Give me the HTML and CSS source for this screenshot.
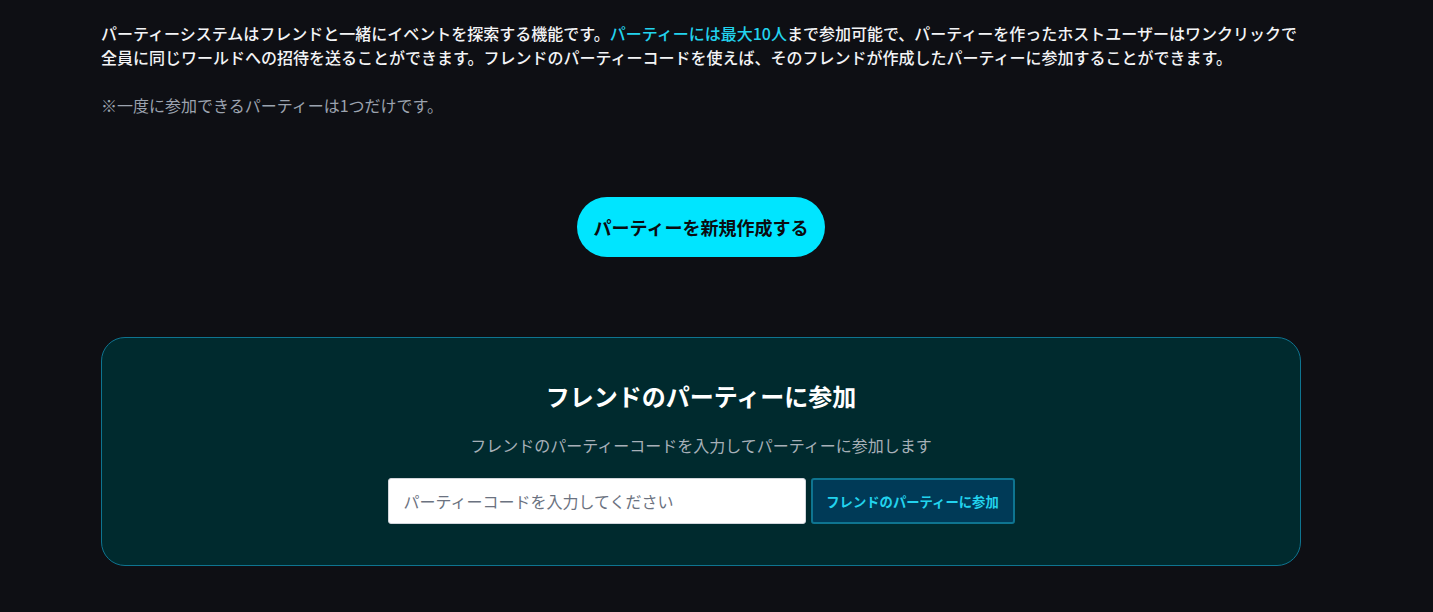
FILE: index.html
```html
<!DOCTYPE html>
<html lang="ja">
<head>
<meta charset="utf-8">
<link rel="stylesheet" href="styles.css">
</head>
<body>
<main class="page">
  <section class="intro">
    <p class="lead">パーティーシステムはフレンドと一緒にイベントを探索する機能です。<span class="accent">パーティーには最大10人</span>まで参加可能で、パーティーを作ったホストユーザーはワンクリックで全員に同じワールドへの招待を送ることができます。フレンドのパーティーコードを使えば、そのフレンドが作成したパーティーに参加することができます。</p>
    <p class="note">※一度に参加できるパーティーは1つだけです。</p>
  </section>
  <section class="create">
    <button class="create-btn" type="button">パーティーを新規作成する</button>
  </section>
  <section class="join-card">
    <h2 class="join-title">フレンドのパーティーに参加</h2>
    <p class="join-sub">フレンドのパーティーコードを入力してパーティーに参加します</p>
    <form class="join-form">
      <input class="join-input" type="text" placeholder="パーティーコードを入力してください">
      <button class="join-btn" type="button">フレンドのパーティーに参加</button>
    </form>
  </section>
</main>
</body>
</html>
```
FILE: styles.css
```css
* { box-sizing: border-box; }
html, body {
  margin: 0;
  padding: 0;
  background: #0e0f14;
}
body {
  font-family: "Noto Sans CJK JP", "Noto Sans", sans-serif;
  color: #f3f4f6;
}
.page {
  width: 1200px;
  margin: 0 0 0 101px;
  padding-top: 21px;
}
.intro p { margin: 0; }
.lead {
  font-size: 16px;
  line-height: 24px;
  font-weight: 500;
  color: #f3f4f6;
}
.accent { color: #22d3ee; }
.note {
  margin-top: 24px !important;
  font-size: 16px;
  line-height: 24px;
  color: #9ca3af;
}
.create {
  display: flex;
  justify-content: center;
  padding: 80px 0 80px;
}
.create-btn {
  height: 60px;
  padding: 0 17px;
  border: none;
  border-radius: 30px;
  background: #00e5ff;
  color: #0b0c10;
  font-family: inherit;
  font-size: 18px;
  font-weight: 700;
  cursor: pointer;
}
.join-card {
  border: 1px solid #0e7490;
  border-radius: 24px;
  background: #002a2e;
  padding: 40px 40px 41px;
  display: flex;
  flex-direction: column;
  align-items: center;
}
.join-title {
  margin: 0;
  font-size: 24px;
  line-height: 36px;
  font-weight: 700;
  color: #ffffff;
}
.join-sub {
  margin: 19px 0 21px;
  font-size: 16px;
  line-height: 24px;
  color: #a7b0b8;
}
.join-form {
  display: flex;
  gap: 5px;
  margin: 0;
}
.join-input {
  width: 418px;
  height: 46px;
  border: 1px solid #d1d5db;
  border-radius: 3px;
  background: #ffffff;
  padding: 0 15px;
  font-family: inherit;
  font-size: 16px;
  color: #111;
  outline: none;
}
.join-input::placeholder { color: #6b7280; }
.join-btn {
  width: 204px;
  height: 46px;
  border: 2px solid #0e7490;
  border-radius: 3px;
  background: #003a57;
  color: #22d3ee;
  font-family: inherit;
  font-size: 13.333px;
  font-weight: 700;
  cursor: pointer;
}
```
